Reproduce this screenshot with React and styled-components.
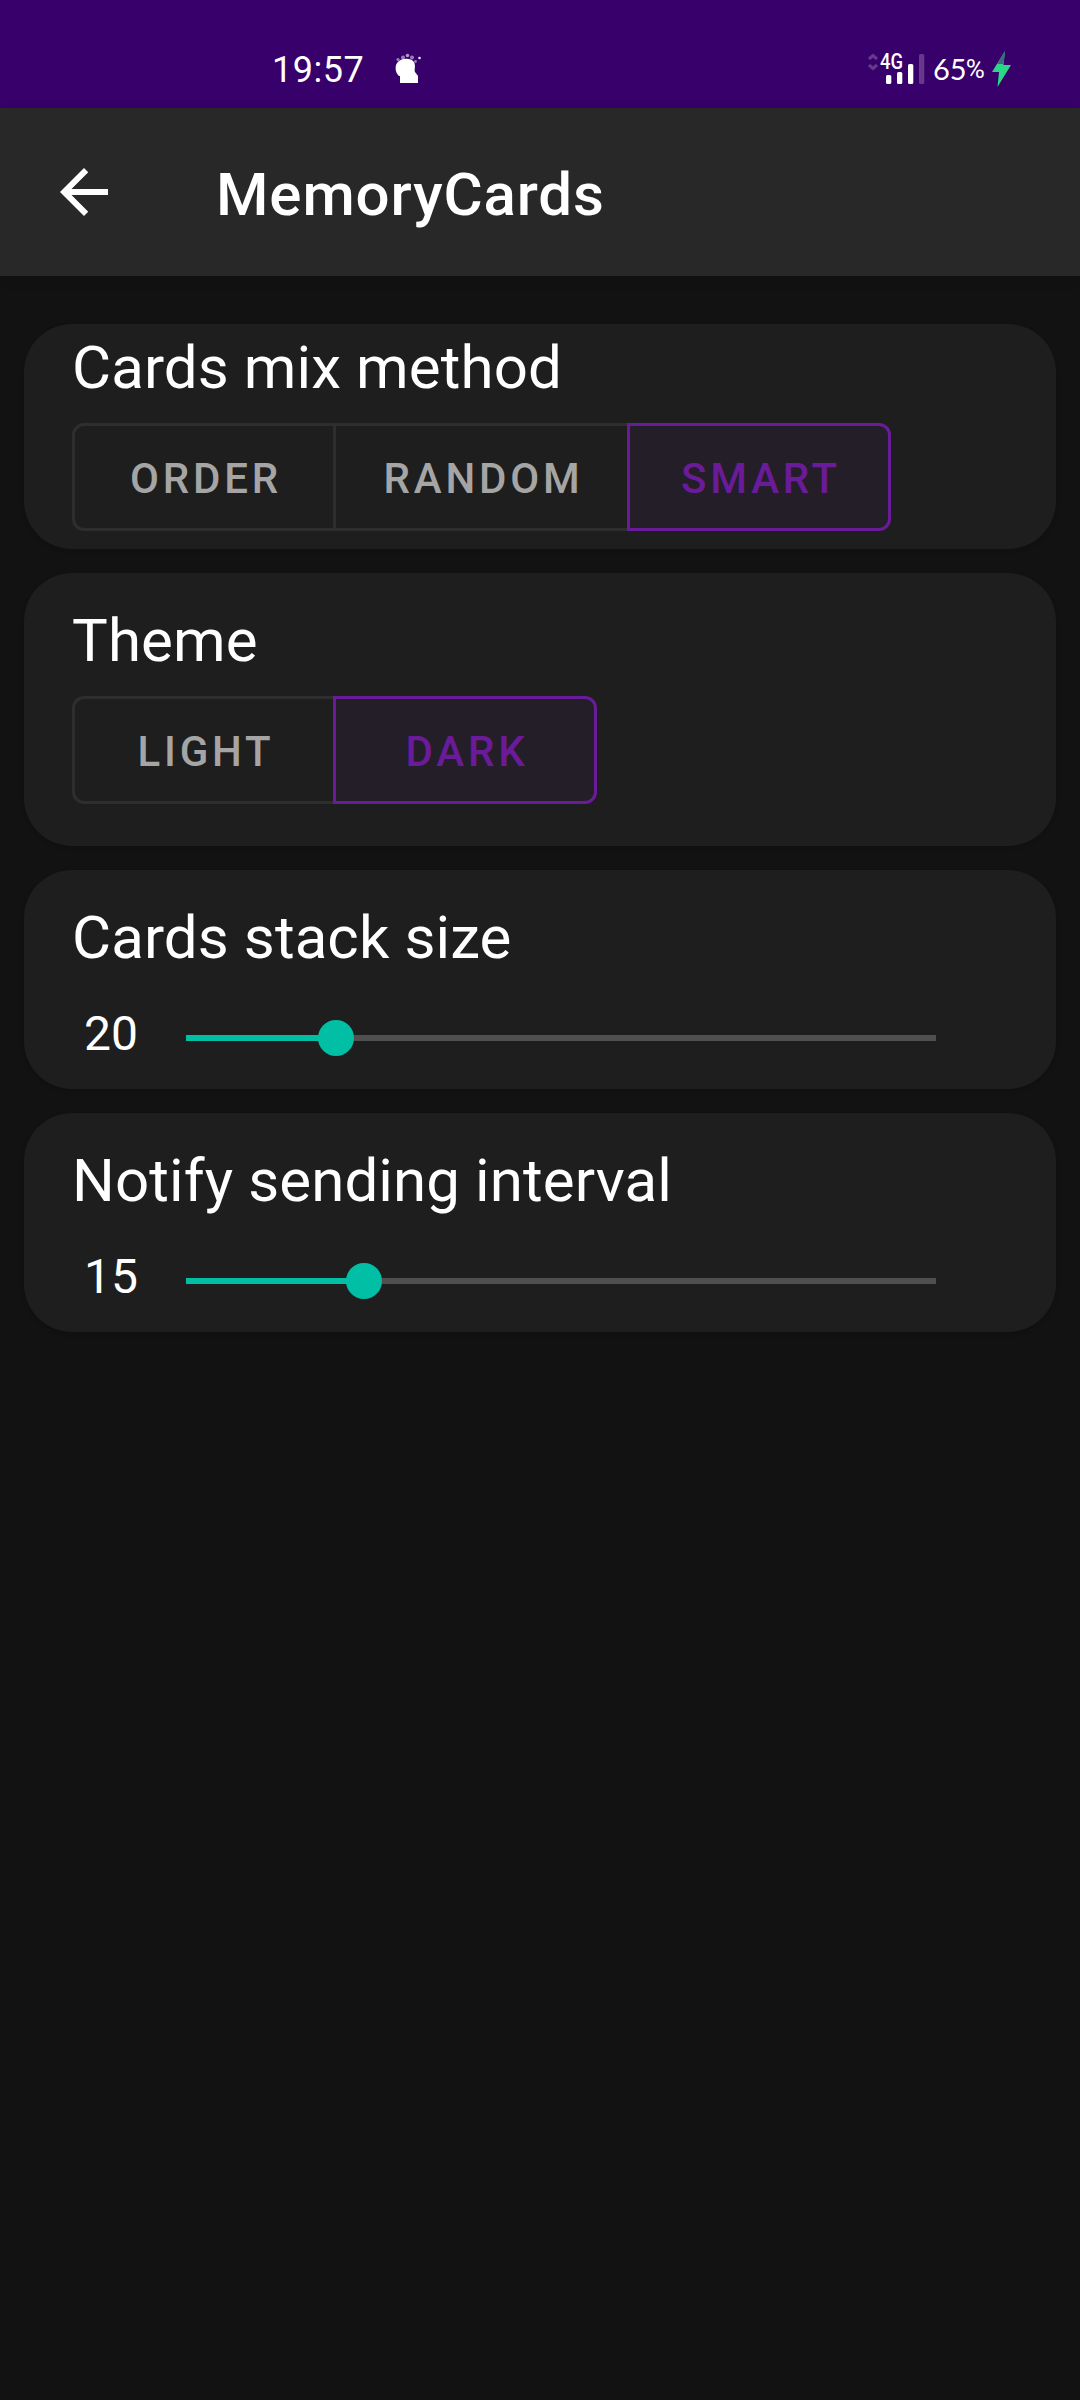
import React from "react";
import styled, { createGlobalStyle, css } from "styled-components";

const Global = createGlobalStyle`
  html, body { margin: 0; background: #121212; }
  * { box-sizing: border-box; }
`;

const Screen = styled.div`
  width: 1080px;
  height: 2400px;
  display: flex;
  flex-direction: column;
  background: #121212;
  color: #fff;
  font-family: Roboto, "Liberation Sans", sans-serif;
  overflow: hidden;
`;

const StatusBar = styled.header`
  flex: none;
  height: 108px;
  padding: 46px 68px 0 272px;
  display: flex;
  align-items: flex-start;
  background: #38006b;
`;

const Clock = styled.span`
  width: 122px;
  margin-top: 1px;
  font: 400 36px/46px Roboto, sans-serif;
  letter-spacing: 0.5px;
  white-space: nowrap;
`;

const NotificationSlot = styled.div`
  display: flex;
  padding-top: 6px;
`;

const StatusGroup = styled.div`
  margin-left: auto;
  display: flex;
  align-items: flex-start;
`;

const Battery = styled.span`
  margin-left: 7px;
  width: 59px;
  display: flex;
  align-items: flex-start;
  font: 400 29px/46px Lato, sans-serif;
  white-space: nowrap;
`;

const Percent = styled.span`
  font: 400 26px/46px Roboto, sans-serif;
  margin-left: -1px;
`;

const Toolbar = styled.div`
  flex: none;
  height: 168px;
  padding-left: 48px;
  display: flex;
  align-items: center;
  gap: 96px;
  background: #282828;
  box-shadow: 0 2px 12px rgba(0, 0, 0, 0.15);
`;

const Title = styled.h1`
  margin: 5px 0 0;
  font-size: 60px;
  font-weight: 500;
  line-height: 80px;
  letter-spacing: 0.9px;
`;

const List = styled.main`
  padding: 48px 24px;
  display: flex;
  flex-direction: column;
  gap: 24px;
`;

const Card = styled.section`
  height: ${(p) => p.$height}px;
  padding: ${(p) => p.$top}px 48px 0;
  border-radius: 48px;
  background: #1e1e1e;
  box-shadow: 0 2px 4px rgba(0, 0, 0, 0.15);
`;

const CardTitle = styled.h2`
  margin: 0;
  padding-top: 1px;
  height: 80px;
  font-size: 60px;
  font-weight: 400;
  line-height: 80px;
  letter-spacing: 0.11px;
  white-space: nowrap;
`;

const ToggleGroup = styled.div`
  display: flex;
  margin-top: 16px;
`;

const Toggle = styled.button`
  width: ${(p) => p.$width}px;
  height: 108px;
  padding: 2px 0 0 4px;
  border: 3px solid #2e2e2e;
  background: transparent;
  color: #a5a5a5;
  font: 500 42px/49px Roboto, sans-serif;
  letter-spacing: 3.8px;
  &:not(:first-child) { margin-left: -3px; }
  &:first-child { border-radius: 12px 0 0 12px; }
  &:last-child { border-radius: 0 12px 12px 0; }
  ${(p) =>
    p.$on &&
    css`
      z-index: 1;
      border-color: #6a1b9a;
      background: #241e28;
      color: #6a1b9a;
    `}
`;

const SliderRow = styled.div`
  display: flex;
  align-items: center;
  height: 64px;
  margin-top: 29px;
  padding-left: 12px;
`;

const Value = styled.span`
  width: 102px;
  margin-top: -9px;
  font-size: 48px;
  line-height: 64px;
`;

const Track = styled.div`
  width: 750px;
  height: 6px;
  display: flex;
  align-items: center;
  background: #4f4f4f;
`;

const Fill = styled.div`
  height: 6px;
  background: #00bfa5;
`;

const Thumb = styled.div`
  flex: none;
  width: 36px;
  height: 36px;
  margin-left: -18px;
  border-radius: 50%;
  background: #00bfa5;
`;

const AppIcon = () => (
  <svg width="30" height="32" viewBox="0 0 30 32" fill="#fff">
    <path d="M5 24C1 21 0 12 5 9 9 6 17 6 20 10 22 14 20 18 21 20L24 24V31H6V24z" />
    <circle cx="4" cy="7.500" r="1.600" opacity=".5" />
    <circle cx="9" cy="5.500" r="2" opacity=".5" />
    <circle cx="13.500" cy="3.500" r="1.800" opacity=".6" />
    <circle cx="18" cy="5.500" r="2" opacity=".5" />
    <circle cx="21.500" cy="9.500" r="1.400" opacity=".5" />
    <circle cx="25.500" cy="6" r="1.300" opacity=".9" />
  </svg>
);

const Signal = () => (
  <svg width="58" height="40" viewBox="0 0 58 40" fill="#fff">
    <g fill="none" stroke="#67398d" strokeWidth="3">
      <path d="M1 13L5 9.500L9 13" />
      <path d="M1 19L5 22.500L9 19" />
    </g>
    <text x="12" y="23" fontFamily="Roboto" fontSize="22" fontWeight="500" textLength="23" lengthAdjust="spacingAndGlyphs">4G</text>
    <rect x="18" y="29" width="5.300" height="9" rx="1.500" />
    <rect x="29" y="26" width="5.300" height="12" rx="1.500" />
    <rect x="40" y="18" width="5.300" height="20" rx="1.500" />
    <rect x="51" y="8" width="5.300" height="30" rx="1.500" fill="#67398d" />
  </svg>
);

const Bolt = () => (
  <svg width="20" height="42" viewBox="0 0 20 42">
    <path d="M13 5L0 26H7L5.500 41L19 19H11.500z" fill="#2bd687" />
    <path d="M13 5L5 18H11.500z" fill="#3a6b80" />
  </svg>
);

const BackArrow = () => (
  <svg width="72" height="72" viewBox="0 0 24 24" fill="#fff">
    <path d="M20 11H7.830l5.590-5.590L12 4l-8 8 8 8 1.410-1.410L7.830 13H20v-2z" />
  </svg>
);

const Slider = ({ value, max }) => (
  <SliderRow>
    <Value>{value}</Value>
    <Track>
      <Fill style={{ width: `${(value / max) * 100}%` }} />
      <Thumb />
    </Track>
  </SliderRow>
);

export default function App() {
  return (
    <Screen>
      <Global />
      <StatusBar>
        <Clock>19:57</Clock>
        <NotificationSlot>
          <AppIcon />
        </NotificationSlot>
        <StatusGroup>
          <Signal />
          <Battery>65<Percent>%</Percent></Battery>
          <Bolt />
        </StatusGroup>
      </StatusBar>
      <Toolbar>
        <BackArrow />
        <Title>MemoryCards</Title>
      </Toolbar>
      <List>
        <Card $height={225} $top={3}>
          <CardTitle>Cards mix method</CardTitle>
          <ToggleGroup>
            <Toggle $width={264}>ORDER</Toggle>
            <Toggle $width={297}>RANDOM</Toggle>
            <Toggle $width={264} $on>SMART</Toggle>
          </ToggleGroup>
        </Card>
        <Card $height={273} $top={27}>
          <CardTitle>Theme</CardTitle>
          <ToggleGroup>
            <Toggle $width={264}>LIGHT</Toggle>
            <Toggle $width={264} $on>DARK</Toggle>
          </ToggleGroup>
        </Card>
        <Card $height={219} $top={27}>
          <CardTitle>Cards stack size</CardTitle>
          <Slider value={20} max={100} />
        </Card>
        <Card $height={219} $top={27}>
          <CardTitle>Notify sending interval</CardTitle>
          <Slider value={15} max={63.300} />
        </Card>
      </List>
    </Screen>
  );
}
